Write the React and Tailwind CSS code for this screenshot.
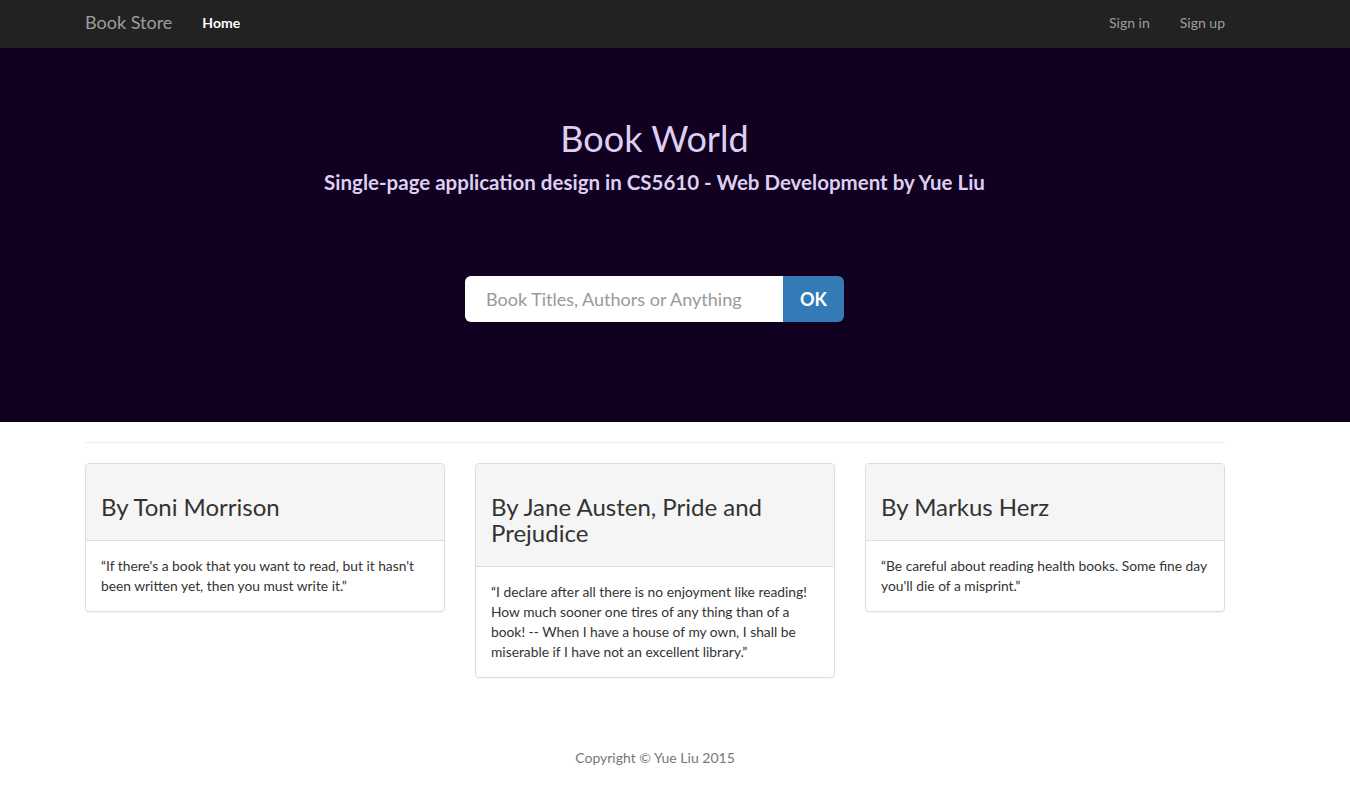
import React from "react";

const quotes = [
  {
    by: "By Toni Morrison",
    text: "\u201cIf there's a book that you want to read, but it hasn't been written yet, then you must write it.\u201d",
  },
  {
    by: "By Jane Austen, Pride and Prejudice",
    text: "\u201cI declare after all there is no enjoyment like reading! How much sooner one tires of any thing than of a book! -- When I have a house of my own, I shall be miserable if I have not an excellent library.\u201d",
  },
  {
    by: "By Markus Herz",
    text: "\u201cBe careful about reading health books. Some fine day you'll die of a misprint.\u201d",
  },
];

export default function App() {
  return (
    <div className="min-h-screen bg-white font-['Lato','Open_Sans',sans-serif] text-[#333]">
      {/* Navbar */}
      <nav className="bg-[#222] h-12 pr-[40px]">
        <div className="w-[1170px] mx-auto px-[15px] h-full pb-[3px] flex items-center justify-between">
          <div className="flex items-center">
            <span className="text-[18px] text-[#9d9d9d]">Book Store</span>
            <span className="ml-[30px] text-[14px] font-bold text-white">Home</span>
          </div>
          <div className="flex items-center gap-[30px] text-[14px] text-[#9d9d9d]">
            <span>Sign in</span>
            <span>Sign up</span>
          </div>
        </div>
      </nav>

      {/* Hero */}
      <header className="bg-[#110020] pt-[70px] pb-[100px] pr-[41px] text-center text-[#dccff2]">
        <h1 className="text-[36px] leading-[40px]">Book World</h1>
        <h3 className="mt-[12px] text-[20.5px] leading-[24px] font-bold">
          Single-page application design in CS5610 - Web Development by Yue Liu
        </h3>
        <form className="mt-[82px] flex justify-center" onSubmit={(e) => e.preventDefault()}>
          <input
            type="text"
            placeholder="Book Titles, Authors or Anything"
            className="w-[318px] h-[46px] rounded-l-[6px] bg-white px-[21px] text-[18px] text-[#555] placeholder:text-[#999] outline-none"
          />
          <button
            type="submit"
            className="w-[61px] h-[46px] rounded-r-[6px] bg-[#337ab7] text-white text-[18px] font-bold"
          >
            OK
          </button>
        </form>
      </header>

      {/* Quotes */}
      <div className="pr-[40px]">
        <main className="w-[1170px] mx-auto px-[15px]">
          <hr className="mt-[20px] mb-[20px] border-t border-[#eee]" />
          <div className="grid grid-cols-3 gap-[30px] items-start">
            {quotes.map((q) => (
              <div key={q.by} className="border border-[#ddd] rounded-[4px] shadow-[0_1px_1px_rgba(0,0,0,0.05)] overflow-hidden">
                <div className="bg-[#f5f5f5] border-b border-[#ddd] px-[15px] pt-[30px] pb-[20px]">
                  <h3 className="text-[24px] leading-[26px] text-[#333]">{q.by}</h3>
                </div>
                <div className="p-[15px] text-[13.8px] leading-[20px] text-[#333]">{q.text}</div>
              </div>
            ))}
          </div>
        </main>

        {/* Footer */}
        <footer className="mt-[69px] pb-[30px] text-center text-[14px] text-[#777]">
          Copyright © Yue Liu 2015
        </footer>
      </div>
    </div>
  );
}
